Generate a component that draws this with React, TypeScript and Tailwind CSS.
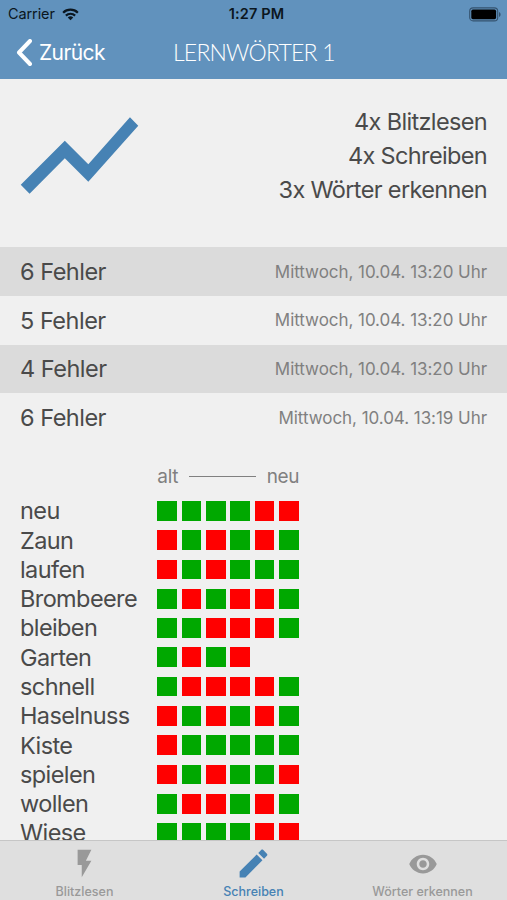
import { clsx } from 'clsx';
import { IoMdCreate } from 'react-icons/io';
import { MdFlashOn, MdRemoveRedEye, MdShowChart } from 'react-icons/md';

const stats = ['4x Blitzlesen', '4x Schreiben', '3x Wörter erkennen'];

const sessions = [
  { errors: 6, date: 'Mittwoch, 10.04. 13:20 Uhr' },
  { errors: 5, date: 'Mittwoch, 10.04. 13:20 Uhr' },
  { errors: 4, date: 'Mittwoch, 10.04. 13:20 Uhr' },
  { errors: 6, date: 'Mittwoch, 10.04. 13:19 Uhr' },
];

// g = correct, r = wrong, oldest attempt first
const words = [
  { word: 'neu', results: 'ggggrr' },
  { word: 'Zaun', results: 'rgrgrg' },
  { word: 'laufen', results: 'rgrggg' },
  { word: 'Brombeere', results: 'grgrrg' },
  { word: 'bleiben', results: 'ggrrrg' },
  { word: 'Garten', results: 'grgr' },
  { word: 'schnell', results: 'grrrrg' },
  { word: 'Haselnuss', results: 'rgrgrg' },
  { word: 'Kiste', results: 'rggggg' },
  { word: 'spielen', results: 'rgrggr' },
  { word: 'wollen', results: 'grrgrg' },
  { word: 'Wiese', results: 'ggggrr' },
];

const tabs = [
  { label: 'Blitzlesen', icon: MdFlashOn, size: 'size-[33px]', active: false },
  { label: 'Schreiben', icon: IoMdCreate, size: 'size-[37px]', active: true },
  { label: 'Wörter erkennen', icon: MdRemoveRedEye, size: 'size-[30px]', active: false },
];

function StatusBar() {
  return (
    <div className="grid grid-cols-3 items-center h-7 pl-2 pr-1.5 text-[#0b1620]">
      <div className="flex items-center gap-[7px]">
        <span className="text-[14.5px] tracking-[-0.1px]">Carrier</span>
        <svg className="w-[17px] h-[13px]" viewBox="0 0 18 13">
          <path d="M1.2 4.6a11.2 11.2 0 0 1 15.6 0" fill="none" stroke="currentColor" strokeWidth="2.4" />
          <path d="M4.1 7.7a7 7 0 0 1 9.8 0" fill="none" stroke="currentColor" strokeWidth="2.3" />
          <path d="M9 12.6 6.1 9.7a4.1 4.1 0 0 1 5.8 0z" fill="currentColor" />
        </svg>
      </div>
      <span className="pl-1 text-center text-[14.5px] font-semibold tracking-[0.15px]">1:27 PM</span>
      <svg className="w-8 h-[15px] justify-self-end" viewBox="0 0 32 15">
        <rect x="0.7" y="0.9" width="28" height="13" rx="3.4" fill="none" stroke="#35536f" strokeWidth="1.1" />
        <rect x="2.3" y="2.6" width="24.8" height="9.6" rx="1.6" fill="#000" />
        <path d="M30 5v5c1-.4 1.6-1.4 1.6-2.5S31 5.4 30 5z" fill="#35536f" />
      </svg>
    </div>
  );
}

function NavBar() {
  return (
    <div className="flex items-center h-[49px] pl-4 text-white">
      <button className="flex items-center gap-[7px] w-[157px]">
        <svg className="w-4 h-[27px]" viewBox="0 0 16 27">
          <path d="M14 2 3 13.5 14 25" fill="none" stroke="currentColor" strokeWidth="4" strokeLinecap="round" strokeLinejoin="round" />
        </svg>
        <span className="text-[21px] tracking-[-0.6px]">Zurück</span>
      </button>
      <h1 className="font-['Lato',sans-serif] font-light text-[23px] tracking-[-0.8px] whitespace-nowrap">LERNWÖRTER 1</h1>
    </div>
  );
}

function TabBar() {
  return (
    <nav className="grid grid-cols-3 h-[60px] shrink-0 border-t border-[#c6c6c6] bg-[#dfdfdf]">
      {tabs.map(({ label, icon: Icon, size, active }) => (
        <button
          key={label}
          className={clsx('flex flex-col items-center pt-1', active ? 'text-[#4682b4]' : 'text-[#999]')}
        >
          <span className="flex items-center justify-center h-[37px]">
            <Icon className={size} />
          </span>
          <span className="mt-[2px] text-[12.5px] leading-4 font-medium whitespace-nowrap">{label}</span>
        </button>
      ))}
    </nav>
  );
}

export default function App() {
  return (
    <div className="flex flex-col w-full h-[900px] overflow-hidden bg-[#f0f0f0] font-['Inter',sans-serif] text-[#4a4a4a]">
      <header className="h-[79px] shrink-0 bg-[#6192bd]">
        <StatusBar />
        <NavBar />
      </header>

      <main className="flex-1 min-h-0 overflow-hidden">
        <section className="flex justify-between h-[168px] pl-[9px] pr-5 pt-[6px]">
          <MdShowChart className="w-[141px] h-[141px] text-[#4682b4]" />
          <div className="pt-5 text-right text-[23.5px] leading-[34.2px] tracking-[-0.65px]">
            {stats.map((stat) => (
              <p key={stat}>{stat}</p>
            ))}
          </div>
        </section>

        <section>
          {sessions.map((session, i) => (
            <div
              key={i}
              className="flex items-center justify-between h-[48.8px] px-5 odd:bg-[#dbdbdb]"
            >
              <span className="text-[23.5px] tracking-[-0.5px]">{session.errors} Fehler</span>
              <span className="pt-[2px] text-[17px] tracking-[-0.05px] text-[#808080]">{session.date}</span>
            </div>
          ))}
        </section>

        <section className="pl-5 pt-[19px]">
          <div className="flex items-center justify-between ml-[137.3px] w-[142px] h-[30px] text-[19px] tracking-[-0.3px] text-[#808080]">
            <span className="pt-[2px]">alt</span>
            <span className="w-[67px] h-px bg-[#808080]" />
            <span className="pt-[2px]">neu</span>
          </div>
          <div className="mt-[5px]">
            {words.map(({ word, results }) => (
              <div key={word} className="flex items-center h-[29.3px]">
                <span className="w-[137.3px] text-[23.5px] tracking-[-0.6px]">{word}</span>
                <div className="flex gap-[4.7px]">
                  {results.split('').map((result, i) => (
                    <span
                      key={i}
                      className={clsx('size-[19.7px]', result === 'g' ? 'bg-[#00a800]' : 'bg-[#ff0000]')}
                    />
                  ))}
                </div>
              </div>
            ))}
          </div>
        </section>
      </main>

      <TabBar />
    </div>
  );
}
